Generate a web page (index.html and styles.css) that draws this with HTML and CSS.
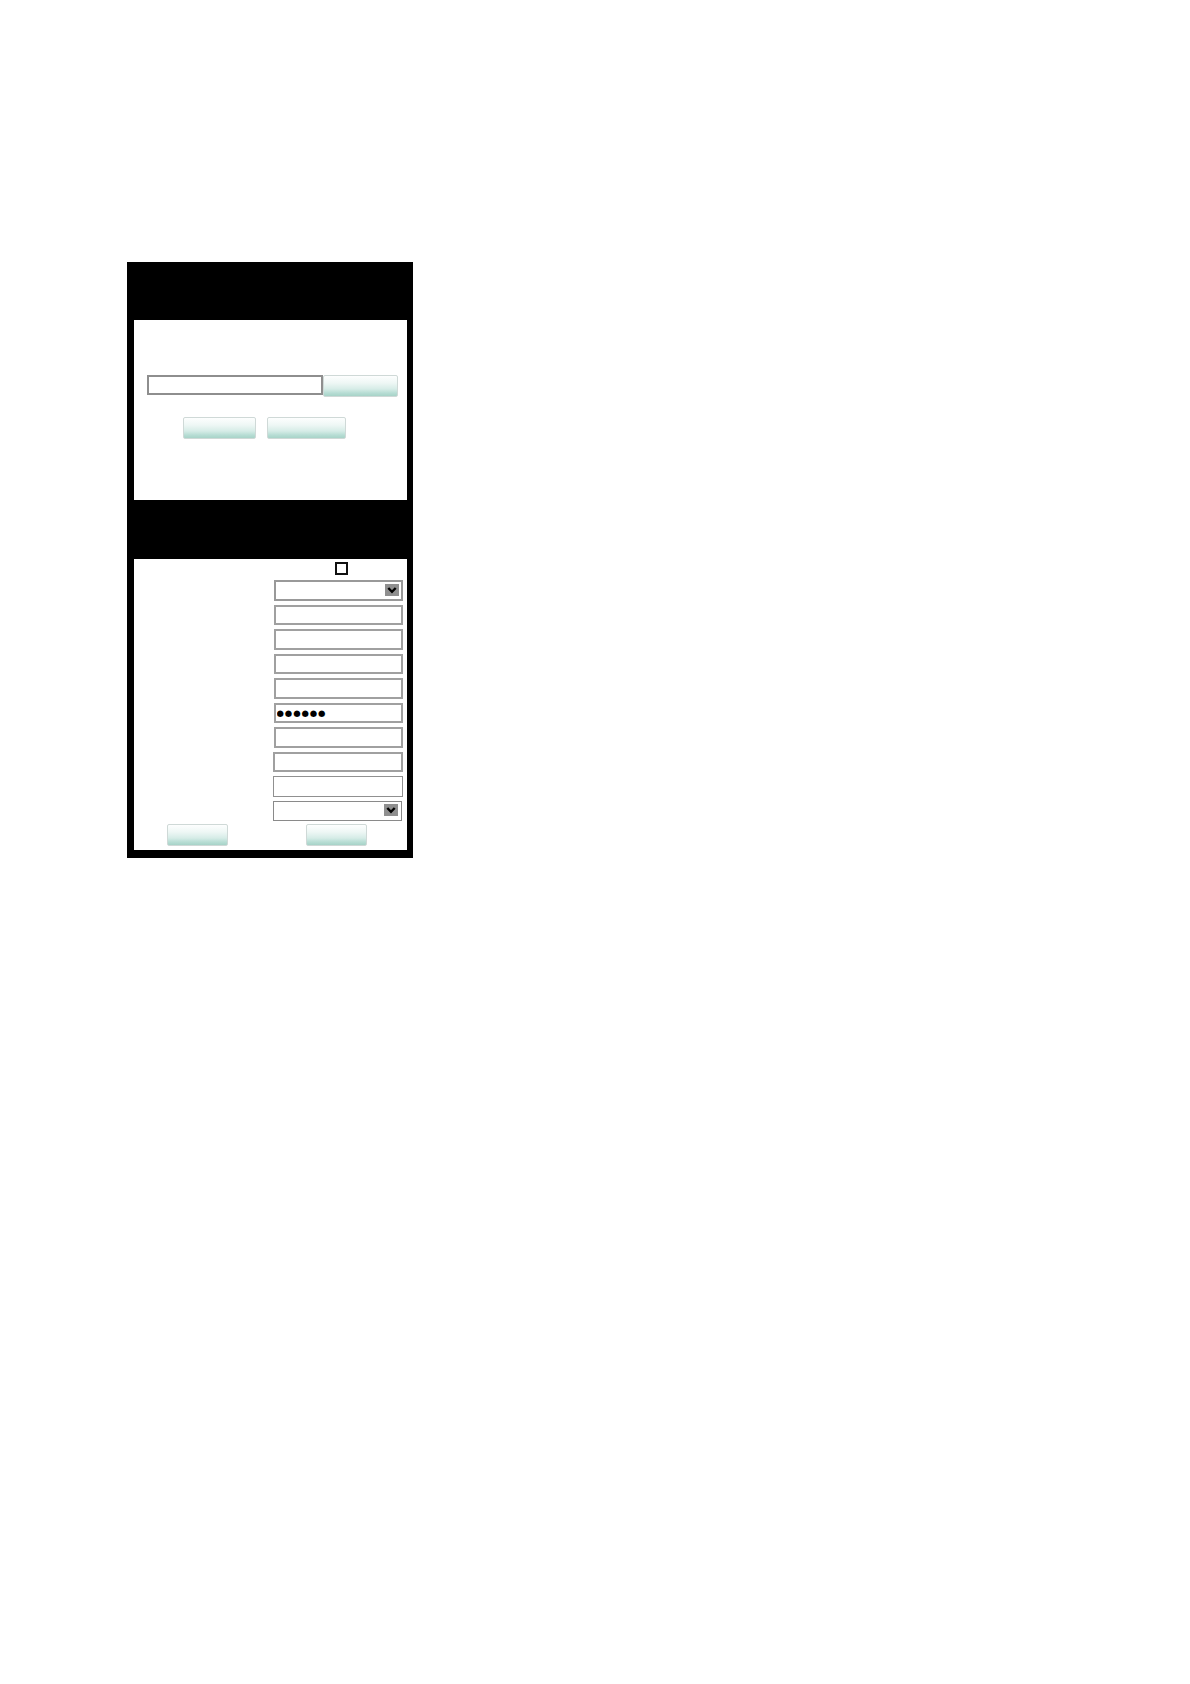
FILE: index.html
```html
<!DOCTYPE html>
<html>
<head>
<meta charset="utf-8">
<link rel="stylesheet" href="styles.css">
</head>
<body>
<div class="app">
  <div class="header"></div>
  <div class="panel panel-top">
    <div class="search-row">
      <input class="field search-field" type="text">
      <button class="btn btn-search"></button>
    </div>
    <div class="action-row">
      <button class="btn btn-a"></button>
      <button class="btn btn-b"></button>
    </div>
  </div>
  <div class="header header-2"></div>
  <div class="panel panel-form">
    <div class="check-row"><span class="checkbox"></span></div>
    <div class="fields">
      <div class="field select select-1"><span class="arrow"><svg width="14" height="12" viewBox="0 0 14 12"><rect width="14" height="12" fill="#8f8f8f"/><path d="M3.3 4 L7 7.8 L10.7 4" fill="none" stroke="#000" stroke-width="2.4"/></svg></span></div>
      <input class="field" type="text">
      <input class="field" type="text">
      <input class="field" type="text">
      <input class="field" type="text">
      <input class="field pwd" type="text" value="●●●●●●" readonly>
      <input class="field" type="text">
      <input class="field shifted" type="text">
      <input class="field shifted thin" type="text">
      <div class="field select select-2 shifted"><span class="arrow"><svg width="14" height="12" viewBox="0 0 14 12"><rect width="14" height="12" fill="#8f8f8f"/><path d="M3.3 4 L7 7.8 L10.7 4" fill="none" stroke="#000" stroke-width="2.4"/></svg></span></div>
    </div>
    <div class="bottom-row">
      <button class="btn btn-c"></button>
      <button class="btn btn-d"></button>
    </div>
  </div>
</div>
</body>
</html>
```

FILE: styles.css
```css
html, body {
  margin: 0;
  padding: 0;
  background: #fff;
  font-family: "Liberation Sans", Arial, sans-serif;
}

.app {
  width: 286px;
  box-sizing: border-box;
  margin: 262px 0 0 127px;
  background: #000;
  padding: 0 6px 8px 7px;
}

.header {
  height: 58px;
}

.header-2 {
  height: 59px;
}

.panel {
  background: #fff;
  box-sizing: border-box;
}

.panel-top {
  height: 180px;
  padding-top: 55px;
}

.search-row {
  display: flex;
  align-items: flex-start;
  margin-left: 13px;
}

.field {
  display: block;
  box-sizing: border-box;
  margin: 0;
  padding: 0 2px;
  background: #fff;
  border: 2px solid #a0a0a0;
  outline: none;
  font-family: "Liberation Sans", Arial, sans-serif;
}

.search-field {
  width: 176px;
  height: 20px;
  border-color: #8e8e8e;
}

.btn {
  display: block;
  box-sizing: border-box;
  margin: 0;
  padding: 0;
  height: 22px;
  border: 1px solid #cfd9d7;
  border-radius: 2px;
  background: linear-gradient(to bottom, #fdfefe 0%, #eef7f5 35%, #d6ece7 65%, #b7ddd4 85%, #a7d3c8 100%);
}

.btn-search {
  width: 75px;
}

.action-row {
  display: flex;
  gap: 11px;
  margin: 20px 0 0 49px;
}

.btn-a {
  width: 73px;
}

.btn-b {
  width: 79px;
}

.panel-form {
  height: 291px;
  padding-top: 3px;
}

.check-row {
  height: 13px;
  padding-left: 201px;
}

.checkbox {
  display: block;
  width: 13px;
  height: 13px;
  box-sizing: border-box;
  border: 2px solid #111;
}

.fields {
  display: flex;
  flex-direction: column;
  gap: 4px;
  margin-top: 5px;
  padding-left: 140px;
}

.fields .field {
  width: 129px;
  height: 20.5px;
}

.fields .shifted {
  margin-left: -1px;
  width: 130px;
}

.fields .thin {
  border-width: 1.5px;
  border-color: #909090;
}

.select {
  position: relative;
}

.select-1 {
  border-color: #999;
}

.fields .select-2 {
  width: 128.5px;
  border-width: 1px;
  border-color: #8a8a8a;
}

.arrow {
  position: absolute;
  right: 2px;
  top: 2px;
  width: 14px;
  height: 12px;
  line-height: 0;
}

.select-2 .arrow {
  right: 2.5px;
  top: 2.5px;
}

.fields .pwd {
  font-family: "DejaVu Sans", sans-serif;
  font-size: 8.5px;
  letter-spacing: 0.9px;
  color: #000;
  padding: 0 0 0 0.5px;
  line-height: 16px;
}

.bottom-row {
  display: flex;
  gap: 78px;
  margin: 2.5px 0 0 33px;
}

.btn-c, .btn-d {
  width: 61px;
}
```
